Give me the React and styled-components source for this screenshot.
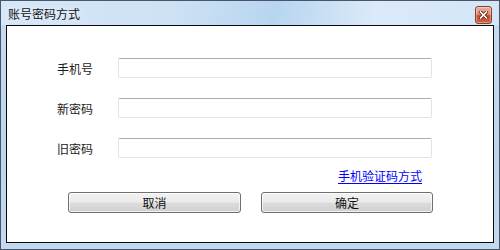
import React from 'react';
import styled, { createGlobalStyle } from 'styled-components';

const GlobalStyle = createGlobalStyle`
html, body {
  margin: 0;
  padding: 0;
  background: #ffffff;
}
body {
  font-family: "Noto Sans CJK SC", "Noto Sans", sans-serif;
}
`;

const Window = styled.div`
width: 500px;
height: 250px;
box-sizing: border-box;
border: 1px solid #4a5666;
padding: 0 5px 6px 5px;
display: flex;
flex-direction: column;
background: linear-gradient(180deg, #c6dcf2 0%, #bcd5ee 60%, #c2d9f0 100%);
`;

const TitleBar = styled.div`
height: 24px;
margin: 0 -5px;
padding: 0 7px 0 7px;
display: flex;
align-items: center;
justify-content: space-between;
background: linear-gradient(100deg, #d6e7f8 0%, #cde1f5 35%, #b8d5f0 55%, #c4dcf3 62%, #dbeafa 75%, #d3e5f7 100%);
`;

const TitleText = styled.span`
font-size: 12px;
color: #111;
margin-top: 1px;
text-shadow: 0 0 6px rgba(255, 255, 255, 0.9);
`;

const CloseButton = styled.div`
width: 17px;
height: 18px;
box-sizing: border-box;
margin-right: 0;
margin-top: 4px;
border: 1px solid #83402f;
border-radius: 3px;
display: flex;
align-items: center;
justify-content: center;
background: linear-gradient(180deg, #eab1a1 0%, #de8c72 45%, #c74a2b 55%, #d0633f 100%);
box-shadow: inset 0 0 0 1px rgba(255, 255, 255, 0.35);
`;

const Client = styled.div`
flex: 1;
border: 1px solid #0a0a0a;
background: #ffffff;
padding: 32px 0 0 50px;
box-sizing: border-box;
`;

const Form = styled.div`
display: grid;
grid-template-columns: 61px 314px;
grid-auto-rows: 20px;
row-gap: 20px;
align-items: center;
`;

const Label = styled.span`
font-size: 12px;
color: #1a1a1a;
line-height: 16px;
margin-top: 1px;
`;

const TextBox = styled.div`
height: 20px;
box-sizing: border-box;
border: 1px solid #e2e3ea;
border-top-color: #abadb3;
border-radius: 2px;
background: #ffffff;
`;

const LinkRow = styled.div`
width: 375px;
margin-top: 10px;
height: 16px;
display: flex;
justify-content: flex-end;
padding-right: 10px;
box-sizing: border-box;
`;

const Link = styled.span`
font-size: 12px;
line-height: 16px;
color: #0000ff;
text-decoration: underline;
text-underline-offset: 2px;
`;

const ButtonRow = styled.div`
margin-top: 8px;
margin-left: 11px;
display: flex;
gap: 20px;
`;

const Button = styled.div`
width: ${p => p.w}px;
height: 21px;
box-sizing: border-box;
border: 1px solid #707070;
border-radius: 3px;
display: flex;
align-items: center;
justify-content: center;
font-size: 12px;
color: #111;
background: linear-gradient(180deg, #f2f2f2 0%, #ebebeb 48%, #dddddd 52%, #cfcfcf 100%);
box-shadow: inset 0 0 0 1px rgba(255, 255, 255, 0.7);
`;

const fields = ['手机号', '新密码', '旧密码'];

function CloseIcon() {
  return (
    <svg width="9" height="8" viewBox="0 0 9 8">
      <path d="M1.5 1 L7.5 7 M7.5 1 L1.5 7" stroke="#5a2418" strokeWidth="3.2" strokeLinecap="square" />
      <path d="M1.5 1 L7.5 7 M7.5 1 L1.5 7" stroke="#ffffff" strokeWidth="1.6" strokeLinecap="square" />
    </svg>
  );
}

export default function App() {
  return (
    <>
      <GlobalStyle />
      <Window>
        <TitleBar>
          <TitleText>账号密码方式</TitleText>
          <CloseButton>
            <CloseIcon />
          </CloseButton>
        </TitleBar>
        <Client>
          <Form>
            {fields.map(f => (
              <React.Fragment key={f}>
                <Label>{f}</Label>
                <TextBox />
              </React.Fragment>
            ))}
          </Form>
          <LinkRow>
            <Link>手机验证码方式</Link>
          </LinkRow>
          <ButtonRow>
            <Button w={173}>取消</Button>
            <Button w={172}>确定</Button>
          </ButtonRow>
        </Client>
      </Window>
    </>
  );
}
